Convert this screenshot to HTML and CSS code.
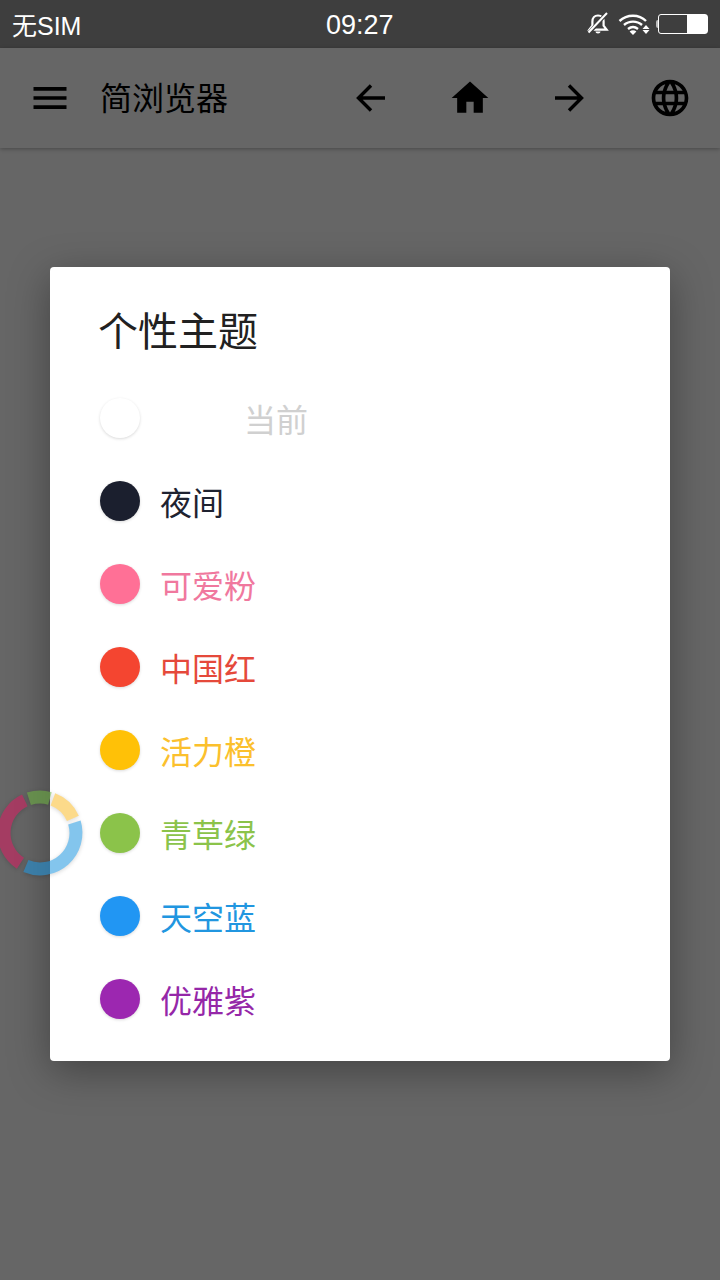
FILE: index.html
```html
<!DOCTYPE html>
<html>
<head>
    <title>简浏览器</title>
    <link rel="stylesheet" href="styles.css">
</head>
<body>
    <div class="status-bar">
        <span class="carrier">无SIM</span>
        <span class="clock">09:27</span>
        <div class="status-icons">
            <svg class="bell" width="24" height="24" viewBox="0 0 24 24">
                <path d="M12 3.500c-3.600 0-5.600 2.600-5.600 6v4.200L3.400 17.600h17.200l-3-3.900V9.500c0-3.400-2-6-5.600-6z" fill="none" stroke="#fff" stroke-width="2.200"/>
                <path d="M9.500 19.500h5c0 1.200-1.100 2-2.500 2s-2.500-.8-2.500-2z" fill="#fff"/>
                <path d="M2.500 21.500 21 1" stroke="#3e3e3e" stroke-width="4"/>
                <path d="M2.500 20.500 21 1" stroke="#fff" stroke-width="2"/>
            </svg>
            <svg class="wifi" width="32" height="24" viewBox="0 0 32 24">
                <path d="M1.500 9C9 2 21 2 28 9M6 13c5-4.500 13-4.500 18 0M10 17c3-2.300 7-2.300 10 0" fill="none" stroke="#fff" stroke-width="2.400"/>
                <path d="M15 23l-3.400-3.600c2-1.400 4.800-1.400 6.800 0z" fill="#fff"/>
                <path d="M28 13l3.500 4h-7zM28 22l3.500-4h-7z" fill="#fff"/>
            </svg>
            <div class="battery"><div class="battery-level"></div></div>
        </div>
    </div>

    <div class="toolbar">
        <div class="tool-btn">
            <svg width="44" height="44" viewBox="0 0 24 24"><path d="M3 18h18v-2H3v2zm0-5h18v-2H3v2zm0-7v2h18V6H3z"/></svg>
        </div>
        <div class="app-title">简浏览器</div>
        <div class="tool-btn">
            <svg width="44" height="44" viewBox="0 0 44 44"><path d="M37 22H11M23 9.500 10.500 22 23 34.500" fill="none" stroke="#000" stroke-width="3.400"/></svg>
        </div>
        <div class="tool-btn">
            <svg width="44" height="44" viewBox="0 0 24 24"><path d="M10 20v-6h4v6h5v-8h3L12 3 2 12h3v8z"/></svg>
        </div>
        <div class="tool-btn">
            <svg width="44" height="44" viewBox="0 0 44 44"><path d="M7 22h26M21 9.500 33.500 22 21 34.500" fill="none" stroke="#000" stroke-width="3.400"/></svg>
        </div>
        <div class="tool-btn">
            <svg width="44" height="44" viewBox="0 0 24 24"><path d="M11.990 2C6.470 2 2 6.480 2 12s4.470 10 9.990 10C17.520 22 22 17.520 22 12S17.520 2 11.990 2zm6.930 6h-2.950c-.32-1.250-.78-2.450-1.380-3.560 1.840.63 3.370 1.910 4.330 3.560zM12 4.040c.83 1.200 1.480 2.530 1.910 3.960h-3.820c.43-1.430 1.080-2.760 1.910-3.960zM4.260 14C4.100 13.360 4 12.690 4 12s.1-1.360.26-2h3.380c-.08.66-.14 1.320-.14 2 0 .68.06 1.340.14 2H4.260zm.82 2h2.950c.32 1.250.78 2.450 1.380 3.560-1.840-.63-3.370-1.900-4.330-3.560zm2.950-8H5.080c.96-1.660 2.490-2.930 4.330-3.560C8.810 5.550 8.350 6.750 8.030 8zM12 19.960c-.83-1.200-1.480-2.530-1.910-3.960h3.820c-.43 1.430-1.080 2.760-1.910 3.960zM14.340 14H9.660c-.09-.66-.16-1.320-.16-2 0-.68.07-1.350.16-2h4.680c.09.65.16 1.320.16 2 0 .68-.07 1.340-.16 2zm.25 5.560c.6-1.110 1.060-2.310 1.380-3.560h2.950c-.96 1.650-2.490 2.930-4.330 3.560zM16.360 14c.08-.66.14-1.320.14-2 0-.68-.06-1.340-.14-2h3.380c.16.64.26 1.310.26 2s-.1 1.360-.26 2h-3.380z"/></svg>
        </div>
    </div>

    <div class="page">
        <div class="dialog">
            <h1 class="dialog-title">个性主题</h1>
            <div class="theme-row">
                <span class="swatch swatch-white"></span>
                <span class="current-tag">当前</span>
            </div>
            <div class="theme-row">
                <span class="swatch swatch-night"></span>
                <span class="theme-name name-night">夜间</span>
            </div>
            <div class="theme-row">
                <span class="swatch swatch-pink"></span>
                <span class="theme-name name-pink">可爱粉</span>
            </div>
            <div class="theme-row">
                <span class="swatch swatch-red"></span>
                <span class="theme-name name-red">中国红</span>
            </div>
            <div class="theme-row">
                <span class="swatch swatch-orange"></span>
                <span class="theme-name name-orange">活力橙</span>
            </div>
            <div class="theme-row">
                <span class="swatch swatch-green"></span>
                <span class="theme-name name-green">青草绿</span>
            </div>
            <div class="theme-row">
                <span class="swatch swatch-blue"></span>
                <span class="theme-name name-blue">天空蓝</span>
            </div>
            <div class="theme-row">
                <span class="swatch swatch-purple"></span>
                <span class="theme-name name-purple">优雅紫</span>
            </div>
        </div>
    </div>

    <!-- floating ball, sits over the dialog edge -->
    <svg class="float-ring" width="100" height="100" viewBox="0 0 100 100">
        <g fill="none" stroke-width="13">
            <path d="M62.900 16.400A36 36 0 0 1 82.900 35.400" stroke="#fbbc2c"/>
            <path d="M84.400 39.500A36 36 0 0 1 35.900 83.100" stroke="#1e96e0"/>
            <path d="M30.400 80.200A36 36 0 0 1 34.800 17.400" stroke="#d81b60"/>
            <path d="M38.900 15.800A36 36 0 0 1 59.900 15.400" stroke="#6cb33f"/>
        </g>
    </svg>
</body>
</html>
```

FILE: styles.css
```css
body {
    margin: 0;
    width: 720px;
    height: 1280px;
    overflow: hidden;
    position: relative;
    background-color: #666;
    font-family: "Noto Sans CJK SC", "Noto Sans", sans-serif;
}
.status-bar {
    height: 48px;
    background-color: #3e3e3e;
    color: #fff;
    display: flex;
    align-items: center;
    justify-content: space-between;
    padding: 0 12px;
    position: relative;
}
.carrier {
    font-family: "Liberation Sans", "Noto Sans CJK SC", sans-serif;
    font-size: 25px;
}
.clock {
    position: absolute;
    left: 326px;
    top: 10px;
    font-family: "Liberation Sans", sans-serif;
    font-size: 27px;
}
.status-icons {
    display: flex;
    align-items: center;
    gap: 8px;
}
.battery {
    width: 48px;
    height: 18px;
    border: 1px solid #fff;
    border-radius: 3px;
    display: flex;
    justify-content: flex-end;
    position: relative;
}
.battery::before {
    content: "";
    position: absolute;
    left: -3px;
    top: 5px;
    width: 2px;
    height: 8px;
    background-color: #bbb;
    border-radius: 2px 0 0 2px;
}
.battery-level {
    width: 20px;
    background-color: #fff;
}
.toolbar {
    height: 100px;
    background-color: #666;
    display: flex;
    align-items: center;
    box-shadow: 0 1px 4px rgba(0, 0, 0, 0.3);
    position: relative;
}
.tool-btn {
    width: 100px;
    display: flex;
    justify-content: center;
    align-items: center;
}
.app-title {
    flex: 1;
    font-size: 32px;
    color: #000;
    line-height: 44px;
    padding-bottom: 4px;
}
.page {
    padding: 119px 50px 0;
}
.dialog {
    height: 794px;
    box-sizing: border-box;
    padding: 38px 50px 0;
    background-color: #fff;
    border-radius: 4px;
    box-shadow: 0 10px 40px rgba(0, 0, 0, 0.35);
}
.dialog-title {
    margin: 0 0 23px -2px;
    font-size: 40px;
    line-height: 48px;
    font-weight: 400;
    color: #212121;
}
.theme-row {
    height: 83px;
    display: flex;
    align-items: center;
}
.swatch {
    width: 40px;
    height: 40px;
    border-radius: 50%;
    box-shadow: 0 1px 3px rgba(0, 0, 0, 0.15);
}
.theme-name {
    margin-left: 20px;
    font-size: 32px;
}
.current-tag {
    margin-left: 104px;
    font-size: 32px;
    color: #d0d0d0;
}
.swatch-white { background-color: #fff; }
.swatch-night { background-color: #1b1f2e; }
.swatch-pink { background-color: #ff7096; }
.swatch-red { background-color: #f44530; }
.swatch-orange { background-color: #ffc107; }
.swatch-green { background-color: #8bc34a; }
.swatch-blue { background-color: #2196f3; }
.swatch-purple { background-color: #9c27b0; }
.name-night { color: #1e2230; }
.name-pink { color: #f0789e; }
.name-red { color: #e5493b; }
.name-orange { color: #fbc02d; }
.name-green { color: #8bc34a; }
.name-blue { color: #2196e0; }
.name-purple { color: #9527a8; }
.float-ring {
    position: absolute;
    left: -10px;
    top: 783px;
    opacity: 0.55;
    filter: drop-shadow(0 1px 2px rgba(0, 0, 0, 0.3));
}
```
